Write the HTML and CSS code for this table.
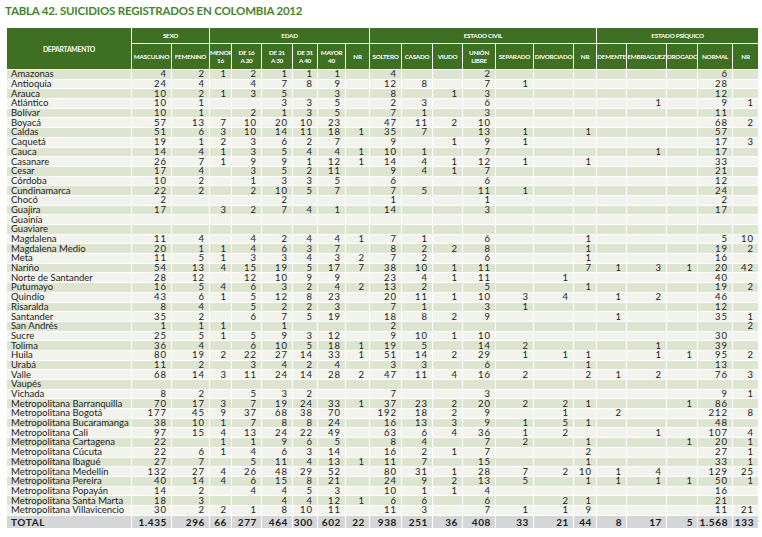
FILE: index.html
```html
<!DOCTYPE html>
<html lang="es">
<head>
<meta charset="utf-8">
<title>Tabla 42</title>
<link rel="stylesheet" href="styles.css">
</head>
<body>
<h1 class="title">TABLA 42. SUICIDIOS REGISTRADOS EN COLOMBIA 2012</h1>
<table class="tbl">
<colgroup>
<col class="c-dep"><col class="c-mas"><col class="c-fem"><col class="c-men"><col class="c-d16"><col class="c-d21"><col class="c-d31"><col class="c-may"><col class="c-nr1"><col class="c-sol"><col class="c-cas"><col class="c-viu"><col class="c-uni"><col class="c-sep"><col class="c-div"><col class="c-nr2"><col class="c-dem"><col class="c-emb"><col class="c-dro"><col class="c-nor"><col class="c-nr3">
</colgroup>
<thead>
<tr class="hd1"><th rowspan="2" class="hdep">DEPARTAMENTO</th><th colspan="2">SEXO</th><th colspan="6">EDAD</th><th colspan="7">ESTADO CIVIL</th><th colspan="5">ESTADO PSÍQUICO</th></tr>
<tr class="hd2"><th>MASCULINO</th><th>FEMENINO</th><th>MENOR<br>16</th><th>DE 16<br>A 20</th><th>DE 21<br>A 30</th><th>DE 31<br>A 40</th><th>MAYOR<br>40</th><th>NR</th><th>SOLTERO</th><th>CASADO</th><th>VIUDO</th><th>UNIÓN<br>LIBRE</th><th>SEPARADO</th><th>DIVORCIADO</th><th>NR</th><th>DEMENTE</th><th>EMBRIAGUEZ</th><th>DROGADO</th><th>NORMAL</th><th>NR</th></tr>
</thead>
<tbody>
<tr><td>Amazonas</td><td>4</td><td>2</td><td>1</td><td>2</td><td>1</td><td>1</td><td>1</td><td></td><td>4</td><td></td><td></td><td>2</td><td></td><td></td><td></td><td></td><td></td><td></td><td>6</td><td></td></tr>
<tr><td>Antioquia</td><td>24</td><td>4</td><td></td><td>4</td><td>7</td><td>8</td><td>9</td><td></td><td>12</td><td>8</td><td></td><td>7</td><td>1</td><td></td><td></td><td></td><td></td><td></td><td>28</td><td></td></tr>
<tr><td>Arauca</td><td>10</td><td>2</td><td>1</td><td>3</td><td>5</td><td></td><td>3</td><td></td><td>8</td><td></td><td>1</td><td>3</td><td></td><td></td><td></td><td></td><td></td><td></td><td>12</td><td></td></tr>
<tr><td>Atlántico</td><td>10</td><td>1</td><td></td><td></td><td>3</td><td>3</td><td>5</td><td></td><td>2</td><td>3</td><td></td><td>6</td><td></td><td></td><td></td><td></td><td>1</td><td></td><td>9</td><td>1</td></tr>
<tr><td>Bolívar</td><td>10</td><td>1</td><td></td><td>2</td><td>1</td><td>3</td><td>5</td><td></td><td>7</td><td>1</td><td></td><td>3</td><td></td><td></td><td></td><td></td><td></td><td></td><td>11</td><td></td></tr>
<tr><td>Boyacá</td><td>57</td><td>13</td><td>7</td><td>10</td><td>20</td><td>10</td><td>23</td><td></td><td>47</td><td>11</td><td>2</td><td>10</td><td></td><td></td><td></td><td></td><td></td><td></td><td>68</td><td>2</td></tr>
<tr><td>Caldas</td><td>51</td><td>6</td><td>3</td><td>10</td><td>14</td><td>11</td><td>18</td><td>1</td><td>35</td><td>7</td><td></td><td>13</td><td>1</td><td></td><td>1</td><td></td><td></td><td></td><td>57</td><td></td></tr>
<tr><td>Caquetá</td><td>19</td><td>1</td><td>2</td><td>3</td><td>6</td><td>2</td><td>7</td><td></td><td>9</td><td></td><td>1</td><td>9</td><td>1</td><td></td><td></td><td></td><td></td><td></td><td>17</td><td>3</td></tr>
<tr><td>Cauca</td><td>14</td><td>4</td><td>1</td><td>3</td><td>5</td><td>4</td><td>4</td><td>1</td><td>10</td><td>1</td><td></td><td>7</td><td></td><td></td><td></td><td></td><td>1</td><td></td><td>17</td><td></td></tr>
<tr><td>Casanare</td><td>26</td><td>7</td><td>1</td><td>9</td><td>9</td><td>1</td><td>12</td><td>1</td><td>14</td><td>4</td><td>1</td><td>12</td><td>1</td><td></td><td>1</td><td></td><td></td><td></td><td>33</td><td></td></tr>
<tr><td>Cesar</td><td>17</td><td>4</td><td></td><td>3</td><td>5</td><td>2</td><td>11</td><td></td><td>9</td><td>4</td><td>1</td><td>7</td><td></td><td></td><td></td><td></td><td></td><td></td><td>21</td><td></td></tr>
<tr><td>Córdoba</td><td>10</td><td>2</td><td></td><td>1</td><td>3</td><td>3</td><td>5</td><td></td><td>6</td><td></td><td></td><td>6</td><td></td><td></td><td></td><td></td><td></td><td></td><td>12</td><td></td></tr>
<tr><td>Cundinamarca</td><td>22</td><td>2</td><td></td><td>2</td><td>10</td><td>5</td><td>7</td><td></td><td>7</td><td>5</td><td></td><td>11</td><td>1</td><td></td><td></td><td></td><td></td><td></td><td>24</td><td></td></tr>
<tr><td>Chocó</td><td>2</td><td></td><td></td><td></td><td>2</td><td></td><td></td><td></td><td>1</td><td></td><td></td><td>1</td><td></td><td></td><td></td><td></td><td></td><td></td><td>2</td><td></td></tr>
<tr><td>Guajira</td><td>17</td><td></td><td>3</td><td>2</td><td>7</td><td>4</td><td>1</td><td></td><td>14</td><td></td><td></td><td>3</td><td></td><td></td><td></td><td></td><td></td><td></td><td>17</td><td></td></tr>
<tr><td>Guainía</td><td></td><td></td><td></td><td></td><td></td><td></td><td></td><td></td><td></td><td></td><td></td><td></td><td></td><td></td><td></td><td></td><td></td><td></td><td></td><td></td></tr>
<tr><td>Guaviare</td><td></td><td></td><td></td><td></td><td></td><td></td><td></td><td></td><td></td><td></td><td></td><td></td><td></td><td></td><td></td><td></td><td></td><td></td><td></td><td></td></tr>
<tr><td>Magdalena</td><td>11</td><td>4</td><td></td><td>4</td><td>2</td><td>4</td><td>4</td><td>1</td><td>7</td><td>1</td><td></td><td>6</td><td></td><td></td><td>1</td><td></td><td></td><td></td><td>5</td><td>10</td></tr>
<tr><td>Magdalena Medio</td><td>20</td><td>1</td><td>1</td><td>4</td><td>6</td><td>3</td><td>7</td><td></td><td>8</td><td>2</td><td>2</td><td>8</td><td></td><td></td><td>1</td><td></td><td></td><td></td><td>19</td><td>2</td></tr>
<tr><td>Meta</td><td>11</td><td>5</td><td>1</td><td>3</td><td>3</td><td>4</td><td>3</td><td>2</td><td>7</td><td>2</td><td></td><td>6</td><td></td><td></td><td>1</td><td></td><td></td><td></td><td>16</td><td></td></tr>
<tr><td>Nariño</td><td>54</td><td>13</td><td>4</td><td>15</td><td>19</td><td>5</td><td>17</td><td>7</td><td>38</td><td>10</td><td>1</td><td>11</td><td></td><td></td><td>7</td><td>1</td><td>3</td><td>1</td><td>20</td><td>42</td></tr>
<tr><td>Norte de Santander</td><td>28</td><td>12</td><td></td><td>12</td><td>10</td><td>9</td><td>9</td><td></td><td>23</td><td>4</td><td>1</td><td>11</td><td></td><td>1</td><td></td><td></td><td></td><td></td><td>40</td><td></td></tr>
<tr><td>Putumayo</td><td>16</td><td>5</td><td>4</td><td>6</td><td>3</td><td>2</td><td>4</td><td>2</td><td>13</td><td>2</td><td></td><td>5</td><td></td><td></td><td>1</td><td></td><td></td><td></td><td>19</td><td>2</td></tr>
<tr><td>Quindío</td><td>43</td><td>6</td><td>1</td><td>5</td><td>12</td><td>8</td><td>23</td><td></td><td>20</td><td>11</td><td>1</td><td>10</td><td>3</td><td>4</td><td></td><td>1</td><td>2</td><td></td><td>46</td><td></td></tr>
<tr><td>Risaralda</td><td>8</td><td>4</td><td></td><td>5</td><td>2</td><td>2</td><td>3</td><td></td><td>7</td><td>1</td><td></td><td>3</td><td>1</td><td></td><td></td><td></td><td></td><td></td><td>12</td><td></td></tr>
<tr><td>Santander</td><td>35</td><td>2</td><td></td><td>6</td><td>7</td><td>5</td><td>19</td><td></td><td>18</td><td>8</td><td>2</td><td>9</td><td></td><td></td><td></td><td>1</td><td></td><td></td><td>35</td><td>1</td></tr>
<tr><td>San Andrés</td><td>1</td><td>1</td><td>1</td><td></td><td>1</td><td></td><td></td><td></td><td>2</td><td></td><td></td><td></td><td></td><td></td><td></td><td></td><td></td><td></td><td></td><td>2</td></tr>
<tr><td>Sucre</td><td>25</td><td>5</td><td>1</td><td>5</td><td>9</td><td>3</td><td>12</td><td></td><td>9</td><td>10</td><td>1</td><td>10</td><td></td><td></td><td></td><td></td><td></td><td></td><td>30</td><td></td></tr>
<tr><td>Tolima</td><td>36</td><td>4</td><td></td><td>6</td><td>10</td><td>5</td><td>18</td><td>1</td><td>19</td><td>5</td><td></td><td>14</td><td>2</td><td></td><td></td><td></td><td>1</td><td></td><td>39</td><td></td></tr>
<tr><td>Huila</td><td>80</td><td>19</td><td>2</td><td>22</td><td>27</td><td>14</td><td>33</td><td>1</td><td>51</td><td>14</td><td>2</td><td>29</td><td>1</td><td>1</td><td>1</td><td></td><td>1</td><td>1</td><td>95</td><td>2</td></tr>
<tr><td>Urabá</td><td>11</td><td>2</td><td></td><td>3</td><td>4</td><td>2</td><td>4</td><td></td><td>3</td><td>3</td><td></td><td>6</td><td></td><td></td><td>1</td><td></td><td></td><td></td><td>13</td><td></td></tr>
<tr><td>Valle</td><td>68</td><td>14</td><td>3</td><td>11</td><td>24</td><td>14</td><td>28</td><td>2</td><td>47</td><td>11</td><td>4</td><td>16</td><td>2</td><td></td><td>2</td><td>1</td><td>2</td><td></td><td>76</td><td>3</td></tr>
<tr><td>Vaupés</td><td></td><td></td><td></td><td></td><td></td><td></td><td></td><td></td><td></td><td></td><td></td><td></td><td></td><td></td><td></td><td></td><td></td><td></td><td></td><td></td></tr>
<tr><td>Vichada</td><td>8</td><td>2</td><td></td><td>5</td><td>3</td><td>2</td><td></td><td></td><td>7</td><td></td><td></td><td>3</td><td></td><td></td><td></td><td></td><td></td><td></td><td>9</td><td>1</td></tr>
<tr><td>Metropolitana Barranquilla</td><td>70</td><td>17</td><td>3</td><td>7</td><td>19</td><td>24</td><td>33</td><td>1</td><td>37</td><td>23</td><td>2</td><td>20</td><td>2</td><td>2</td><td>1</td><td></td><td></td><td>1</td><td>86</td><td></td></tr>
<tr><td>Metropolitana Bogotá</td><td>177</td><td>45</td><td>9</td><td>37</td><td>68</td><td>38</td><td>70</td><td></td><td>192</td><td>18</td><td>2</td><td>9</td><td></td><td>1</td><td></td><td>2</td><td></td><td></td><td>212</td><td>8</td></tr>
<tr><td>Metropolitana Bucaramanga</td><td>38</td><td>10</td><td>1</td><td>7</td><td>8</td><td>8</td><td>24</td><td></td><td>16</td><td>13</td><td>3</td><td>9</td><td>1</td><td>5</td><td>1</td><td></td><td></td><td></td><td>48</td><td></td></tr>
<tr><td>Metropolitana Cali</td><td>97</td><td>15</td><td>4</td><td>13</td><td>24</td><td>22</td><td>49</td><td></td><td>63</td><td>6</td><td>4</td><td>36</td><td>1</td><td>2</td><td></td><td></td><td>1</td><td></td><td>107</td><td>4</td></tr>
<tr><td>Metropolitana Cartagena</td><td>22</td><td></td><td>1</td><td>1</td><td>9</td><td>6</td><td>5</td><td></td><td>8</td><td>4</td><td></td><td>7</td><td>2</td><td></td><td>1</td><td></td><td></td><td>1</td><td>20</td><td>1</td></tr>
<tr><td>Metropolitana Cúcuta</td><td>22</td><td>6</td><td>1</td><td>4</td><td>6</td><td>3</td><td>14</td><td></td><td>16</td><td>2</td><td>1</td><td>7</td><td></td><td></td><td>2</td><td></td><td></td><td></td><td>27</td><td>1</td></tr>
<tr><td>Metropolitana Ibagué</td><td>27</td><td>7</td><td></td><td>5</td><td>11</td><td>4</td><td>13</td><td>1</td><td>11</td><td>7</td><td></td><td>15</td><td></td><td></td><td>1</td><td></td><td></td><td></td><td>33</td><td>1</td></tr>
<tr><td>Metropolitana Medellín</td><td>132</td><td>27</td><td>4</td><td>26</td><td>48</td><td>29</td><td>52</td><td></td><td>80</td><td>31</td><td>1</td><td>28</td><td>7</td><td>2</td><td>10</td><td>1</td><td>4</td><td></td><td>129</td><td>25</td></tr>
<tr><td>Metropolitana Pereira</td><td>40</td><td>14</td><td>4</td><td>6</td><td>15</td><td>8</td><td>21</td><td></td><td>24</td><td>9</td><td>2</td><td>13</td><td>5</td><td></td><td>1</td><td>1</td><td>1</td><td>1</td><td>50</td><td>1</td></tr>
<tr><td>Metropolitana Popayán</td><td>14</td><td>2</td><td></td><td>4</td><td>4</td><td>5</td><td>3</td><td></td><td>10</td><td>1</td><td>1</td><td>4</td><td></td><td></td><td></td><td></td><td></td><td></td><td>16</td><td></td></tr>
<tr><td>Metropolitana Santa Marta</td><td>18</td><td>3</td><td></td><td></td><td>4</td><td>4</td><td>12</td><td>1</td><td>6</td><td>6</td><td></td><td>6</td><td></td><td>2</td><td>1</td><td></td><td></td><td></td><td>21</td><td></td></tr>
<tr><td>Metropolitana Villavicencio</td><td>30</td><td>2</td><td>2</td><td>1</td><td>8</td><td>10</td><td>11</td><td></td><td>11</td><td>3</td><td></td><td>7</td><td>1</td><td>1</td><td>9</td><td></td><td></td><td></td><td>11</td><td>21</td></tr>
</tbody>
<tfoot>
<tr class="total"><td>TOTAL</td><td>1.435</td><td>296</td><td>66</td><td>277</td><td>464</td><td>300</td><td>602</td><td>22</td><td>938</td><td>251</td><td>36</td><td>408</td><td>33</td><td>21</td><td>44</td><td>8</td><td>17</td><td>5</td><td>1.568</td><td>133</td></tr>
</tfoot>
</table>
</body>
</html>
```
FILE: styles.css
```css
html, body {
  margin: 0;
  padding: 0;
  background: #ffffff;
}
body {
  padding: 3px 4px 0 6px;
  font-family: Lato, "Noto Sans", sans-serif;
  color: #1c1c1c;
}
.title {
  margin: 0 0 8px -1px;
  font-size: 11.5px;
  line-height: 16px;
  font-weight: 700;
  color: #47842c;
  letter-spacing: -0.2px;
}
.tbl {
  width: 752px;
  table-layout: fixed;
  border-collapse: collapse;
}
.c-dep { width: 125px; }
.c-mas { width: 40px; }
.c-fem { width: 38px; }
.c-men { width: 22px; }
.c-d16 { width: 30px; }
.c-d21 { width: 31px; }
.c-d31 { width: 25px; }
.c-may { width: 28px; }
.c-nr1 { width: 24px; }
.c-sol { width: 32px; }
.c-cas { width: 31px; }
.c-viu { width: 30px; }
.c-uni { width: 33px; }
.c-sep { width: 38px; }
.c-div { width: 40px; }
.c-nr2 { width: 23px; }
.c-dem { width: 30px; }
.c-emb { width: 40px; }
.c-dro { width: 31px; }
.c-nor { width: 35px; }
.c-nr3 { width: 26px; }

th {
  background: #3f6f22;
  color: #ffffff;
  font-weight: 700;
  font-size: 6.3px;
  line-height: 8px;
  letter-spacing: -0.25px;
  text-align: center;
  vertical-align: middle;
  border: 1px solid #ffffff;
  padding: 0;
  white-space: nowrap;
  overflow: hidden;
}
.hd1 th { height: 15px; }
.hd2 th { height: 25px; }
.hdep { font-size: 6.8px; }

td {
  border: 1px solid #ffffff;
  padding: 0 4px 0 0;
  height: 8.7px;
  font-size: 9.5px;
  line-height: 8px;
  letter-spacing: 1px;
  text-align: right;
  white-space: nowrap;
  overflow: visible;
  background: #f1f3ec;
}
td:first-child {
  text-align: left;
  padding: 0 0 0 4px;
  letter-spacing: 0;
}
tbody tr:nth-child(odd) td { background: #dde5d1; }

.total td {
  background: #d4d6d7;
  font-weight: 700;
  height: 12px;
  font-size: 10px;
  letter-spacing: 0.6px;
}
```
